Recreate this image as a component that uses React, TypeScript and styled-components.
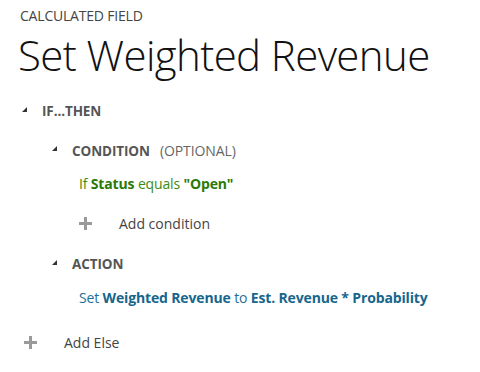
import styled, { createGlobalStyle } from "styled-components";

const Global = createGlobalStyle`
  body {
    margin: 0;
    background: #fff;
    font-family: "Open Sans", "Noto Sans", sans-serif;
  }
`;

const Page = styled.div`
  width: 480px;
  height: 372px;
  padding: 6px 0 0 20px;
  box-sizing: border-box;
  overflow: hidden;
`;

const Kicker = styled.div`
  font-size: 14px;
  line-height: 20px;
  color: #444;
  letter-spacing: -0.2px;
`;

const Title = styled.h1`
  margin: 4px 0 0 -2px;
  font-size: 42px;
  font-weight: 300;
  line-height: 50px;
  color: #111;
  letter-spacing: -0.6px;
`;

const Block = styled.div<{ $indent: number }>`
  display: flex;
  flex-direction: column;
  padding-left: ${(p) => p.$indent}px;
`;

const Head = styled.div`
  display: flex;
  align-items: center;
  height: 20px;
  gap: 15px;
`;

const Caret = styled.span`
  width: 0;
  height: 0;
  border-left: 5px solid transparent;
  border-bottom: 5px solid #333;
  margin-top: -4px;
`;

const Label = styled.span`
  font-size: 13.5px;
  font-weight: 700;
  color: #555;
  letter-spacing: -0.1px;
`;

const Hint = styled.span`
  font-size: 14px;
  font-weight: 400;
  color: #666;
  margin-left: 10px;
`;

const Rule = styled.div<{ $tone: "green" | "blue" }>`
  font-size: 14px;
  line-height: 20px;
  color: ${(p) => (p.$tone === "green" ? "#3c8c14" : "#1f6f98")};
  letter-spacing: -0.15px;

  b {
    font-weight: 700;
    color: ${(p) => (p.$tone === "green" ? "#2a7a08" : "#16668d")};
  }
`;

const AddRow = styled.div<{ $gap: number }>`
  display: flex;
  align-items: center;
  gap: ${(p) => p.$gap}px;
  height: 20px;
  font-size: 14px;
  color: #444;
`;

const Plus = () => (
  <svg width="13" height="13" viewBox="0 0 13 13">
    <rect x="5" y="0" width="3" height="13" fill="#9a9a9a" />
    <rect x="0" y="5" width="13" height="3" fill="#9a9a9a" />
  </svg>
);

export default function App() {
  return (
    <>
      <Global />
      <Page>
        <Kicker>CALCULATED FIELD</Kicker>
        <Title>Set Weighted Revenue</Title>
        <Block $indent={2} style={{ marginTop: 21 }}>
          <Head>
            <Caret />
            <Label>IF...THEN</Label>
          </Head>
          <Block $indent={30} style={{ marginTop: 19 }}>
            <Head>
              <Caret />
              <Label>
                CONDITION<Hint>(OPTIONAL)</Hint>
              </Label>
            </Head>
            <Block $indent={27} style={{ marginTop: 14, gap: 19 }}>
              <Rule $tone="green">
                If <b>Status</b> equals <b>"Open"</b>
              </Rule>
              <AddRow $gap={27}>
                <Plus />
                <span>Add condition</span>
              </AddRow>
            </Block>
          </Block>
          <Block $indent={30} style={{ marginTop: 21 }}>
            <Head>
              <Caret />
              <Label>ACTION</Label>
            </Head>
            <Block $indent={27} style={{ marginTop: 14 }}>
              <Rule $tone="blue">
                Set <b>Weighted Revenue</b> to <b>Est. Revenue * Probability</b>
              </Rule>
            </Block>
          </Block>
        </Block>
        <AddRow $gap={27} style={{ marginTop: 24, paddingLeft: 4 }}>
          <Plus />
          <span>Add Else</span>
        </AddRow>
      </Page>
    </>
  );
}
